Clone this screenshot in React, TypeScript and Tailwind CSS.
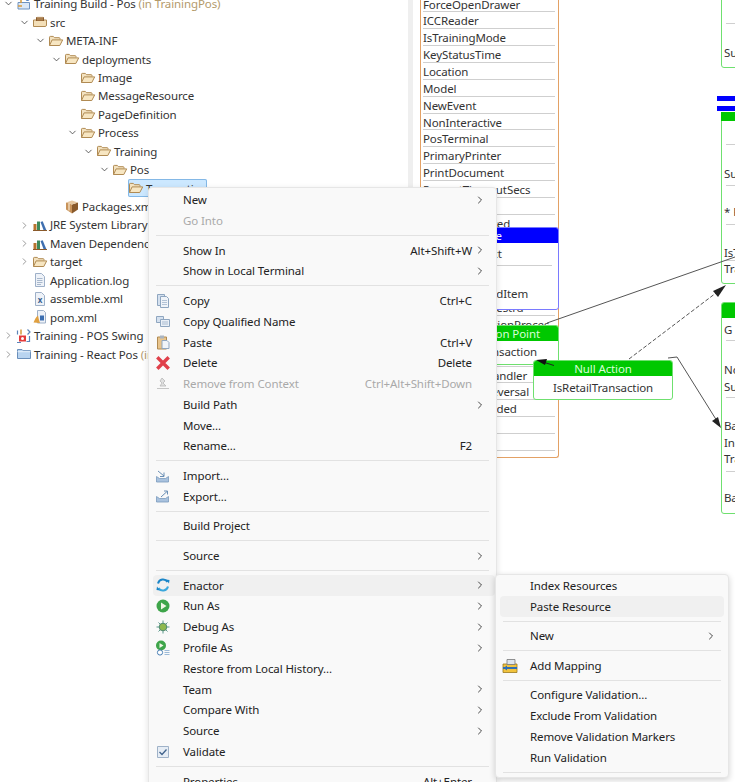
import { ChevronDown, ChevronRight } from "lucide-react";

const font = "font-['Noto_Sans',sans-serif]";

function FolderOpen() {
  return (
    <svg width="16" height="16" viewBox="0 0 16 16" className="shrink-0">
      <path d="M1.5 12.5V4.2c0-.5.3-.8.8-.8h3l1.2 1.3h4.7c.5 0 .8.3.8.8v1" fill="#f3e2c0" stroke="#b08a52" strokeWidth="1" />
      <path d="M1.5 12.5l2.6-5.6h10.6l-2.9 5.6z" fill="#f7e6c2" stroke="#b08a52" strokeWidth="1" strokeLinejoin="round" />
    </svg>
  );
}

function SrcFolder() {
  return (
    <svg width="16" height="16" viewBox="0 0 16 16" className="shrink-0">
      <path d="M1.5 12.5V6h13v5c0 .8-.5 1.5-1.3 1.5z" fill="#f3dfb8" stroke="#b08a52" />
      <path d="M4 7V3.2h8V7z" fill="#8a5a2b" />
      <path d="M6 2.5v4M8 2.5v4M10 2.5v4" stroke="#d9b684" strokeWidth=".8" />
    </svg>
  );
}

function ProjectIcon() {
  return (
    <svg width="16" height="16" viewBox="0 0 16 16" className="shrink-0">
      <path d="M2 6.5h11.5v6.5H2z" fill="#dce8f6" stroke="#6f93c0" />
      <path d="M5 7V3h5" fill="none" stroke="#d69a3c" strokeWidth="1.5" />
      <circle cx="11.5" cy="3" r="2" fill="#4f7fc0" />
      <path d="M2 10h4" stroke="#d69a3c" strokeWidth="1.5" />
    </svg>
  );
}

function SwingIcon() {
  return (
    <svg width="16" height="16" viewBox="0 0 16 16" className="shrink-0">
      <path d="M3 7.5h7v6H3z" fill="#e33b3b" />
      <path d="M1.5 2.5v4M1 14.5h4M11.5 1.5l2.5 2.5-2.5 2.5M13.5 8v5.5h-3" fill="none" stroke="#5c84b8" strokeWidth="1.2" />
      <path d="M5 1.5v5" stroke="#d69a3c" strokeWidth="1.5" />
      <circle cx="6.5" cy="10.5" r="1.5" fill="#fff" />
    </svg>
  );
}

function BlueFolder() {
  return (
    <svg width="16" height="16" viewBox="0 0 16 16" className="shrink-0">
      <path d="M1.5 12.5V3.5h4.5l1.2 1.2h7.3v7.8z" fill="#b9d4f0" stroke="#6a8fbb" />
      <path d="M1.5 5.7h13" stroke="#e8f1fb" />
    </svg>
  );
}

function PackageBox() {
  return (
    <svg width="16" height="16" viewBox="0 0 16 16" className="shrink-0">
      <path d="M8 5.5L14 3.5v7L8 14.5z" fill="#8a5a2b" />
      <path d="M8 5.5L2 3.5v7l6 4z" fill="#c8935a" />
      <path d="M2 3.5L8 1.5l6 2-6 2z" fill="#e6c7a0" />
      <path d="M5 4.5v7" stroke="#f0dcc0" strokeWidth="1.4" />
    </svg>
  );
}

function LibraryIcon() {
  return (
    <svg width="16" height="16" viewBox="0 0 16 16" className="shrink-0">
      <path d="M1.5 13V7h3v6z" fill="#b8732f" />
      <path d="M5 13V4.5h3V13z" fill="#3e8a5b" />
      <path d="M8.5 5l2.2-.8 3.6 8.8H11.5z" fill="#3f6fb0" />
      <path d="M1 13.5h14" stroke="#8a5a2b" />
    </svg>
  );
}

function FileIcon({ letter }: { letter?: string }) {
  return (
    <svg width="16" height="16" viewBox="0 0 16 16" className="shrink-0">
      <path d="M3.5 1.5h6l3 3v10h-9z" fill="#eef2f8" stroke="#9eb0c8" />
      {letter ? (
        <text x="8" y="12" fontSize="8" textAnchor="middle" fill="#3a5f8f" fontWeight="700" fontFamily="Noto Sans">
          {letter}
        </text>
      ) : (
        <path d="M5 6.5h5.5M5 8.5h5.5M5 10.5h5.5M5 12.5h4" stroke="#a8b8cc" />
      )}
    </svg>
  );
}

function PomIcon() {
  return (
    <svg width="16" height="16" viewBox="0 0 16 16" className="shrink-0">
      <path d="M5.5 1.5h6l2 2v10.5h-8z" fill="#eef2f8" stroke="#9eb0c8" />
      <path d="M8 6.5h4v5H8z" fill="#3a6db0" />
      <path d="M1.5 13.5C3 10 4 8 6 6.5c.5 2.5 1 5 2 7.5z" fill="#e0a040" />
    </svg>
  );
}

const tree = [
  { level: 0, open: true, icon: <ProjectIcon />, label: "Training Build - Pos", extra: " (in TrainingPos)" },
  { level: 1, open: true, icon: <SrcFolder />, label: "src" },
  { level: 2, open: true, icon: <FolderOpen />, label: "META-INF" },
  { level: 3, open: true, icon: <FolderOpen />, label: "deployments" },
  { level: 4, icon: <FolderOpen />, label: "Image" },
  { level: 4, icon: <FolderOpen />, label: "MessageResource" },
  { level: 4, icon: <FolderOpen />, label: "PageDefinition" },
  { level: 4, open: true, icon: <FolderOpen />, label: "Process" },
  { level: 5, open: true, icon: <FolderOpen />, label: "Training" },
  { level: 6, open: true, icon: <FolderOpen />, label: "Pos" },
  { level: 7, icon: <FolderOpen />, label: "Transaction", selected: true },
  { level: 3, icon: <PackageBox />, label: "Packages.xml" },
  { level: 1, closed: true, icon: <LibraryIcon />, label: "JRE System Library" },
  { level: 1, closed: true, icon: <LibraryIcon />, label: "Maven Dependencies" },
  { level: 1, closed: true, icon: <FolderOpen />, label: "target" },
  { level: 1, icon: <FileIcon />, label: "Application.log" },
  { level: 1, icon: <FileIcon letter="x" />, label: "assemble.xml" },
  { level: 1, icon: <PomIcon />, label: "pom.xml" },
  { level: 0, closed: true, icon: <SwingIcon />, label: "Training - POS Swing" },
  { level: 0, closed: true, icon: <BlueFolder />, label: "Training - React Pos", extra: " (in" },
];

function TreeRow({ row }: { row: (typeof tree)[number] }) {
  return (
    <div className="flex h-[18.45px] items-center whitespace-nowrap" style={{ paddingLeft: row.level * 16 }}>
      <span className="flex w-[16px] shrink-0 justify-center">
        {row.open && <ChevronDown size={11} strokeWidth={1.8} className="text-[#444]" />}
        {row.closed && <ChevronRight size={11} strokeWidth={1.6} className="text-[#777]" />}
      </span>
      <span className={row.selected ? "flex h-[18px] w-[79px] items-center gap-[2px] rounded-[2px] bg-[#cce8ff] shadow-[inset_0_0_0_1px_#84b8e6]" : "flex items-center gap-[2px]"}>
        {row.icon}
        <span className="text-[#333]">
          {row.label}
          {row.extra && <span className="text-[#b39a6b]">{row.extra}</span>}
        </span>
      </span>
    </div>
  );
}

const orangeRows = [
  "ForceOpenDrawer", "ICCReader", "IsTrainingMode", "KeyStatusTime", "Location", "Model", "NewEvent",
  "NonInteractive", "PosTerminal", "PrimaryPrinter", "PrintDocument", "PromptTimeoutSecs", "", "ReceiptRequired",
  "", "", "", "", "ConfirmPostRestrd", "RetailTransactionProces", "", "",
  "TransactionHandler", "TransactionReversal", "DiscountProvided", "", "",
];

function OrangeNode() {
  return (
    <div className="absolute left-[420px] top-[-5px] h-[463px] w-[139px] rounded-b-[3px] border-x-[1.5px] border-b-[1.5px] border-[#e3a165] pl-[2px] pr-[3px] pt-[0.6px]">
      {orangeRows.map((t, i) => (
        <div key={i} className="h-[16.87px] overflow-hidden whitespace-nowrap border-b-[1.5px] border-[#cfcfcf] leading-[17px] text-[#333]">
          {t}
        </div>
      ))}
    </div>
  );
}

function ProcessNodes() {
  return (
    <>
      {/* blue node behind the menu */}
      <div className="absolute left-[470px] top-[227px] h-[83px] w-[89px] overflow-hidden rounded-[3px] border border-[#7a7aff] bg-white">
        <div className="flex h-[15px] items-center justify-end whitespace-nowrap bg-[#0000ff] pr-[56px] text-white">Void Sale</div>
        <div className="flex h-[22px] items-center pl-[6px] text-[#333]">Next</div>
        <div className="mx-[6px] h-px bg-[#cfcfcf]" />
        <div className="mt-[19px] pl-[9px] text-[#333]">VoidItem</div>
      </div>
      {/* green entry point */}
      <div className="absolute left-[440px] top-[325px] h-[40px] w-[119px] overflow-hidden rounded-t-[3px] border border-[#6fe06f] bg-white">
        <div className="flex h-[15px] items-center justify-end whitespace-nowrap bg-[#00c800] pr-[18px] text-[#d8ffd8]">Transaction Point</div>
        <div className="flex h-[22px] items-center justify-end pr-[21px] text-[#333]">Transaction</div>
      </div>
      {/* null action */}
      <div className="absolute left-[533px] top-[360px] w-[140px] overflow-hidden rounded-[3px] border border-[#6fe06f] bg-white">
        <div className="flex h-[15px] items-center justify-center bg-[#00c800] text-[#d8ffd8]">Null Action</div>
        <div className="flex h-[23px] items-center justify-center text-[#333]">IsRetailTransaction</div>
      </div>
    </>
  );
}

function RightNode({ top, height, header, rows }: { top: number; height: number; header?: boolean; rows: { y: number; t?: string }[] }) {
  return (
    <div className="absolute left-[721px] w-[20px] overflow-hidden rounded-l-[3px] border border-[#6fe06f] bg-white" style={{ top, height }}>
      {header && <div className="h-[15px] bg-[#00c800]" />}
      {rows.map((r, i) =>
        r.t ? (
          <div key={i} className="absolute left-[2px] whitespace-nowrap leading-[16px] text-[#333]" style={{ top: r.y - top - 8 }}>
            {r.t}
          </div>
        ) : (
          <div key={i} className="absolute left-[4px] h-px w-[20px] bg-[#cfcfcf]" style={{ top: r.y - top - 1 }} />
        ),
      )}
    </div>
  );
}

function Connectors() {
  return (
    <svg width="735" height="782" viewBox="0 0 735 782" className="absolute left-0 top-0">
      <path d="M547 323L735 257" stroke="#555" strokeWidth="1" fill="none" />
      <path d="M629 359L716 293" stroke="#555" strokeWidth="1" strokeDasharray="4 2" fill="none" />
      <path d="M726 285L713 291L718 297Z" fill="#222" />
      <path d="M668 358L677 357L717 421" stroke="#555" strokeWidth="1" fill="none" />
      <path d="M721 428L712 421L718 417Z" fill="#222" />
      <path d="M554 365.5L543 362" stroke="#222" strokeWidth="1" fill="none" />
      <path d="M536 360L547 359L545 365Z" fill="#111" />
    </svg>
  );
}

type Item = {
  label?: string;
  sep?: boolean;
  icon?: React.ReactNode;
  key?: string;
  sub?: boolean;
  off?: boolean;
  hover?: boolean;
};

function CopyIcon() {
  return (
    <svg width="16" height="16" viewBox="0 0 16 16">
      <path d="M2.5 1.5h7v11h-7z" fill="#d5e1ef" stroke="#8fa6c0" />
      <path d="M5.5 3.5h6l2 2v9h-8z" fill="#f0f4f9" stroke="#8fa6c0" />
      <path d="M7 7.5h5M7 9.5h5M7 11.5h5" stroke="#b3c3d6" />
    </svg>
  );
}

function CopyNameIcon() {
  return (
    <svg width="16" height="16" viewBox="0 0 16 16">
      <path d="M1.5 3.5h7v6h-7z" fill="#d5e1ef" stroke="#8fa6c0" />
      <path d="M5.5 6.5h9v7h-9z" fill="#eaf0f7" stroke="#8fa6c0" />
      <path d="M7 9h6M7 11h6" stroke="#a9bbd0" />
    </svg>
  );
}

function PasteIcon() {
  return (
    <svg width="16" height="16" viewBox="0 0 16 16">
      <path d="M2.5 3h9v12h-9z" fill="#e8c48c" stroke="#b08a52" />
      <path d="M5 1.5h4v3H5z" fill="#aab4c0" />
      <path d="M7 6.5h5l2 2v6H7z" fill="#f0f4f9" stroke="#8fa6c0" />
    </svg>
  );
}

function DeleteIcon() {
  return (
    <svg width="16" height="16" viewBox="0 0 16 16">
      <path d="M3.5 3.5l9 9M12.5 3.5l-9 9" stroke="#e0404a" strokeWidth="3.4" strokeLinecap="square" />
    </svg>
  );
}

function RemoveCtxIcon() {
  return (
    <svg width="16" height="16" viewBox="0 0 16 16">
      <path d="M7 2l3 3-2 2 3 3H5l2-3-2-2zM2 12.5h12" fill="#e0e0e0" stroke="#b8b8b8" strokeWidth=".8" />
    </svg>
  );
}

function ImportIcon({ out }: { out?: boolean }) {
  return (
    <svg width="16" height="16" viewBox="0 0 16 16">
      <path d="M1.5 8.5l3 2h6l3-2v5.5h-12z" fill="#a9c2de" stroke="#7a9abd" strokeWidth=".8" />
      <path d={out ? "M6 9L12 3.5M9 3h3.5v3.5" : "M3 3l6 5M9 4.5V8.5H5"} fill="none" stroke="#6a8fb5" strokeWidth="1" />
    </svg>
  );
}

function EnactorIcon() {
  return (
    <svg width="16" height="16" viewBox="0 0 16 16">
      <path d="M3 6.5A5.2 5.2 0 0 1 12.5 5" fill="none" stroke="#1c86c8" strokeWidth="2" />
      <path d="M13 9.5A5.2 5.2 0 0 1 3.5 11" fill="none" stroke="#3aa7dc" strokeWidth="2" />
      <path d="M11 2.5l3.5.5-.5 3.5zM5 13.5l-3.5-.5.5-3.5z" fill="#1c86c8" />
    </svg>
  );
}

function RunIcon() {
  return (
    <svg width="16" height="16" viewBox="0 0 16 16">
      <circle cx="8" cy="8" r="6.5" fill="#3ea54a" />
      <path d="M6 4.5L11.5 8 6 11.5z" fill="#f2f7e6" />
    </svg>
  );
}

function DebugIcon() {
  return (
    <svg width="16" height="16" viewBox="0 0 16 16">
      <path d="M8 1.5v13M1.5 8h13M3.5 3.5l9 9M12.5 3.5l-9 9" stroke="#5d9a8e" strokeWidth="1" />
      <circle cx="8" cy="8" r="3.8" fill="#8fb84e" stroke="#4f8a72" />
    </svg>
  );
}

function ProfileIcon() {
  return (
    <svg width="16" height="16" viewBox="0 0 16 16">
      <circle cx="6" cy="5.5" r="5" fill="#3ea54a" />
      <path d="M4.5 3L8.5 5.5 4.5 8z" fill="#f2f7e6" />
      <circle cx="5" cy="12.5" r="2.6" fill="#fff" stroke="#4a7fb5" />
      <path d="M9.5 10.5h5M9.5 12.5h5M9.5 14.5h5" stroke="#9dbbd8" />
    </svg>
  );
}

function CheckIcon() {
  return (
    <svg width="16" height="16" viewBox="0 0 16 16">
      <path d="M2.5 2.5h11v11h-11z" fill="#e6edf5" stroke="#9fb2c8" />
      <path d="M4.5 8l2.5 2.5 4.5-5" fill="none" stroke="#41638c" strokeWidth="1.3" />
    </svg>
  );
}

function MappingIcon() {
  return (
    <svg width="16" height="16" viewBox="0 0 16 16">
      <path d="M1 6h14v8.5H1z" fill="#f2c33c" stroke="#9a7a20" strokeWidth=".8" />
      <path d="M5 1.5h8v5H5z" fill="#dfe5ec" stroke="#777" strokeWidth=".8" />
      <path d="M1 10h14" stroke="#2f6fb5" strokeWidth="2" />
      <path d="M1.5 10L5 7.5v5z" fill="#2f6fb5" />
    </svg>
  );
}

const mainItems: Item[] = [
  { label: "New", sub: true },
  { label: "Go Into", off: true },
  { sep: true },
  { label: "Show In", key: "Alt+Shift+W", sub: true },
  { label: "Show in Local Terminal", sub: true },
  { sep: true },
  { label: "Copy", icon: <CopyIcon />, key: "Ctrl+C" },
  { label: "Copy Qualified Name", icon: <CopyNameIcon /> },
  { label: "Paste", icon: <PasteIcon />, key: "Ctrl+V" },
  { label: "Delete", icon: <DeleteIcon />, key: "Delete" },
  { label: "Remove from Context", icon: <RemoveCtxIcon />, key: "Ctrl+Alt+Shift+Down", off: true },
  { label: "Build Path", sub: true },
  { label: "Move..." },
  { label: "Rename...", key: "F2" },
  { sep: true },
  { label: "Import...", icon: <ImportIcon /> },
  { label: "Export...", icon: <ImportIcon out /> },
  { sep: true },
  { label: "Build Project" },
  { sep: true },
  { label: "Source", sub: true },
  { sep: true },
  { label: "Enactor", icon: <EnactorIcon />, sub: true, hover: true },
  { label: "Run As", icon: <RunIcon />, sub: true },
  { label: "Debug As", icon: <DebugIcon />, sub: true },
  { label: "Profile As", icon: <ProfileIcon />, sub: true },
  { label: "Restore from Local History..." },
  { label: "Team", sub: true },
  { label: "Compare With", sub: true },
  { label: "Source", sub: true },
  { label: "Validate", icon: <CheckIcon /> },
  { sep: true },
  { label: "Properties", key: "Alt+Enter" },
];

const subItems: Item[] = [
  { label: "Index Resources" },
  { label: "Paste Resource", hover: true },
  { sep: true },
  { label: "New", sub: true },
  { sep: true },
  { label: "Add Mapping", icon: <MappingIcon /> },
  { sep: true },
  { label: "Configure Validation..." },
  { label: "Exclude From Validation" },
  { label: "Remove Validation Markers" },
  { label: "Run Validation" },
  { sep: true },
];

function MenuItems({ items, main }: { items: Item[]; main?: boolean }) {
  return (
    <>
      {items.map((it, i) =>
        it.sep ? (
          <div key={i} className={`ml-[3px] my-[3.9px] h-px bg-[#e2e2e2] ${main ? "mr-[6px]" : "mr-[3px]"}`} />
        ) : (
          <div key={i} className={`flex h-[20.8px] items-center rounded-[4px] ${main ? "pr-[7px]" : "pr-[5px]"} ${it.hover ? "bg-[#f0f0f0]" : ""}`}>
            <span className="ml-[2px] flex w-[16px] shrink-0 justify-center">{it.icon}</span>
            <span className={`ml-[12px] flex-1 whitespace-nowrap ${it.off ? "text-[#a9a9a9]" : "text-[#222]"}`}>{it.label}</span>
            {it.key && <span className={`whitespace-nowrap ${it.off ? "text-[#a9a9a9]" : "text-[#222]"}`}>{it.key}</span>}
            <span className="flex w-[16px] shrink-0 justify-center">
              {it.sub && <ChevronRight size={12} strokeWidth={1.8} className="text-[#333]" />}
            </span>
          </div>
        ),
      )}
    </>
  );
}

export default function App() {
  return (
    <div className={`relative h-[782px] w-[735px] overflow-hidden bg-white text-[11.5px] tracking-[-0.1px] ${font}`}>
      <div className="-mt-[5.4px] w-[408px]">
        {tree.map((row) => (
          <TreeRow key={row.label} row={row} />
        ))}
      </div>
      <div className="absolute bottom-0 left-[408px] top-0 w-[5px] bg-[#efefef]" />

      <OrangeNode />
      <ProcessNodes />
      <RightNode top={-10} height={78} rows={[{ y: 23 }, { y: 52, t: "Su" }]} />
      <div className="absolute left-[717px] top-[96px] h-[5px] w-[18px] bg-[#0000ff]" />
      <div className="absolute left-[717px] top-[106px] h-[5px] w-[18px] bg-[#0000ff]" />
      <RightNode
        top={112}
        height={172}
        rows={[
          { y: 144 },
          { y: 173, t: "Su" },
          { y: 185 },
          { y: 211, t: "* P" },
          { y: 224 },
          { y: 252, t: "IsT" },
          { y: 260 },
          { y: 268, t: "Tra" },
        ]}
      />
      <div className="absolute left-[721px] top-[112px] h-[9px] w-[14px] bg-[#00c800]" />
      <RightNode
        top={302}
        height={212}
        header
        rows={[
          { y: 329, t: "G" },
          { y: 340 },
          { y: 369, t: "No" },
          { y: 386, t: "Su" },
          { y: 397 },
          { y: 425, t: "Ba" },
          { y: 442, t: "Inc" },
          { y: 458, t: "Tra" },
          { y: 471 },
          { y: 497, t: "Ba" },
        ]}
      />
      <Connectors />

      <div className="absolute left-[148px] top-[187px] h-[620px] w-[349px] rounded-[4px] border border-[#e6e6e6] bg-[#f9f9f9] pl-[4px] pr-[1px] pt-[1.4px] shadow-[0_2px_6px_rgba(0,0,0,0.12)]">
        <MenuItems items={mainItems} main />
      </div>
      <div className="absolute left-[495px] top-[574px] h-[204px] w-[234px] rounded-[4px] border border-[#e6e6e6] bg-[#f9f9f9] px-[4px] pt-[0.2px] shadow-[0_2px_6px_rgba(0,0,0,0.18)]">
        <MenuItems items={subItems} />
      </div>
    </div>
  );
}
